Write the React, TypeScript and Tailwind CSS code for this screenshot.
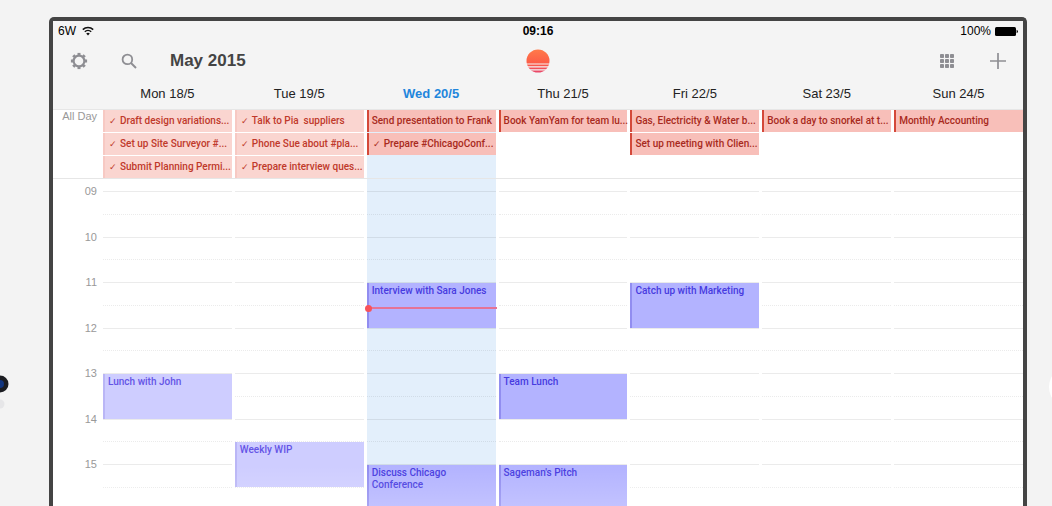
import React from "react";
import clsx from "clsx";

type AllDayItem = {
  title: string;
  checked?: boolean;
};

type CalendarEvent = {
  title: string;
  start: number;
  end: number;
};

type Day = {
  label: string;
  past?: boolean;
  today?: boolean;
  allDay: AllDayItem[];
  events: CalendarEvent[];
};

const FIRST_HOUR = 9;
const HOURS = ["09", "10", "11", "12", "13", "14", "15", "16"];
const NOW = 11.56;

const days: Day[] = [
  {
    label: "Mon 18/5",
    past: true,
    allDay: [
      { title: "Draft design variations...", checked: true },
      { title: "Set up Site Surveyor #...", checked: true },
      { title: "Submit Planning Permi...", checked: true },
    ],
    events: [{ title: "Lunch with John", start: 13, end: 14 }],
  },
  {
    label: "Tue 19/5",
    past: true,
    allDay: [
      { title: "Talk to Pia  suppliers", checked: true },
      { title: "Phone Sue about #pla...", checked: true },
      { title: "Prepare interview ques...", checked: true },
    ],
    events: [{ title: "Weekly WIP", start: 14.5, end: 15.5 }],
  },
  {
    label: "Wed 20/5",
    today: true,
    allDay: [
      { title: "Send presentation to Frank" },
      { title: "Prepare #ChicagoConf...", checked: true },
    ],
    events: [
      { title: "Interview with Sara Jones", start: 11, end: 12 },
      { title: "Discuss Chicago Conference", start: 15, end: 17 },
    ],
  },
  {
    label: "Thu 21/5",
    allDay: [{ title: "Book YamYam for team lu..." }],
    events: [
      { title: "Team Lunch", start: 13, end: 14 },
      { title: "Sageman's Pitch", start: 15, end: 17 },
    ],
  },
  {
    label: "Fri 22/5",
    allDay: [
      { title: "Gas, Electricity & Water b..." },
      { title: "Set up meeting with Clien..." },
    ],
    events: [{ title: "Catch up with Marketing", start: 11, end: 12 }],
  },
  {
    label: "Sat 23/5",
    allDay: [{ title: "Book a day to snorkel at t..." }],
    events: [],
  },
  {
    label: "Sun 24/5",
    allDay: [{ title: "Monthly Accounting" }],
    events: [],
  },
];

const WifiIcon = () => (
  <svg width="12" height="10" viewBox="0 0 12 10" fill="none" stroke="#111" strokeWidth="1.5">
    <path d="M0.8 3.6 A7.4 7.4 0 0 1 11.2 3.6" />
    <path d="M2.8 5.8 A4.6 4.6 0 0 1 9.2 5.8" />
    <path d="M6 9.4 L4.2 7.5 A2.6 2.6 0 0 1 7.8 7.5 Z" fill="#111" stroke="none" />
  </svg>
);

const BatteryIcon = () => (
  <svg width="23" height="9" viewBox="0 0 23 9" fill="#000">
    <rect width="21" height="9" rx="1.5" />
    <path d="M21.6 2.8 Q23 3.2 23 4.5 T21.6 6.2 Z" />
  </svg>
);

const GearIcon = () => (
  <svg width="18" height="18" viewBox="0 0 18 18" fill="none" stroke="#8e8e93">
    <circle cx="9" cy="9" r="5.4" strokeWidth="2.2" />
    {[0, 45, 90, 135, 180, 225, 270, 315].map((angle) => (
      <path key={angle} d="M9 0.9 V3.4" strokeWidth="3" transform={`rotate(${angle} 9 9)`} />
    ))}
  </svg>
);

const SearchIcon = () => (
  <svg width="16" height="16" viewBox="0 0 16 16" fill="none" stroke="#8e8e93" strokeWidth="1.8">
    <circle cx="6.4" cy="6.4" r="4.8" />
    <path d="M10 10 L15 15" strokeWidth="2" />
  </svg>
);

const GridIcon = () => (
  <svg width="14" height="14" viewBox="0 0 14 14" fill="#8e8e93">
    {[0, 5, 10].map((y) =>
      [0, 5, 10].map((x) => <rect key={`${x}-${y}`} x={x} y={y} width="4" height="4" rx="0.8" />)
    )}
  </svg>
);

const PlusIcon = () => (
  <svg width="16" height="16" viewBox="0 0 16 16" stroke="#8e8e93" strokeWidth="1.7">
    <path d="M8 0 V16 M0 8 H16" />
  </svg>
);

const SunLogo = () => (
  <svg width="24" height="24" viewBox="0 0 24 24">
    <defs>
      <linearGradient id="sun" x1="0" y1="0" x2="0" y2="1">
        <stop offset="0" stopColor="#ff7a4a" />
        <stop offset="0.65" stopColor="#fc5a47" />
        <stop offset="1" stopColor="#e8476b" />
      </linearGradient>
    </defs>
    <circle cx="12" cy="12" r="11.5" fill="url(#sun)" />
    <path d="M0 15 H24 M0 17.8 H24 M0 20.8 H24" stroke="#f4f4f4" strokeWidth="1.2" />
  </svg>
);

const StatusBar = () => (
  <div className="grid h-[20px] grid-cols-3 items-center px-[5px] text-[12px] text-black">
    <div className="flex items-center gap-[6px]">
      <span>6W</span>
      <WifiIcon />
    </div>
    <div className="text-center font-bold">09:16</div>
    <div className="flex items-center justify-end gap-[4px]">
      <span>100%</span>
      <BatteryIcon />
    </div>
  </div>
);

const Toolbar = () => (
  <div className="grid h-[40px] grid-cols-3 items-center px-[17px]">
    <div className="flex items-center">
      <button aria-label="Settings">
        <GearIcon />
      </button>
      <button className="ml-[33px]" aria-label="Search">
        <SearchIcon />
      </button>
      <h1 className="ml-[33px] text-[17px] font-bold whitespace-nowrap text-[#444]">May 2015</h1>
    </div>
    <div className="flex justify-center">
      <SunLogo />
    </div>
    <div className="flex items-center justify-end gap-[36px]">
      <button aria-label="Month view">
        <GridIcon />
      </button>
      <button aria-label="Add event">
        <PlusIcon />
      </button>
    </div>
  </div>
);

const AllDayRow: React.FC<{ item: AllDayItem; past?: boolean }> = ({ item, past }) => (
  <li
    className={clsx(
      "flex h-[22px] border-l-2 pl-[3px] font-[Roboto,sans-serif] text-[10px] leading-[22px] font-medium whitespace-pre",
      past ? "border-[#f7c9c3] bg-[#fad5d0] text-[#c0392b]" : "border-[#d4493a] bg-[#f8bfb9] text-[#a82a20]"
    )}
  >
    {item.checked && <span className="w-[12px] shrink-0 pl-px text-[9px] font-normal">✓</span>}
    <span>{item.title}</span>
  </li>
);

const EventBlock: React.FC<{ event: CalendarEvent; past?: boolean }> = ({ event, past }) => {
  const row = (event.start - FIRST_HOUR) * 2 + 1;
  const span = (event.end - event.start) * 2;

  return (
    <div
      className={clsx(
        "z-10 col-start-1 mt-px border-l-2 py-[2px] pr-[8px] pl-[3px] font-[Roboto,sans-serif] text-[10px] leading-[12px] font-medium",
        past ? "border-[#bab6f6] bg-[#cecdff] text-[#6454e6]" : "border-[#918df0] bg-[#b3b3ff] text-[#473be0]"
      )}
      style={{ gridRow: `${row} / span ${span}` }}
    >
      {event.title}
    </div>
  );
};

const DayColumn: React.FC<{ day: Day }> = ({ day }) => (
  <div className={clsx("pt-[12px]", day.today && "bg-[#e3effb]")}>
    <div className="relative grid h-[364px] grid-cols-1 grid-rows-[repeat(16,minmax(0,1fr))]">
      {HOURS.map((hour, i) => (
        <React.Fragment key={hour}>
          <div className="col-start-1 border-t border-black/8" style={{ gridRow: i * 2 + 1 }} />
          <div className="col-start-1 border-t border-dotted border-black/8" style={{ gridRow: i * 2 + 2 }} />
        </React.Fragment>
      ))}
      {day.events.map((event) => (
        <EventBlock key={event.title} event={event} past={day.past} />
      ))}
      {day.today && (
        <div
          className="absolute inset-x-0 z-20 -mr-px flex h-[2px] items-center bg-[#e57396]"
          style={{ top: `${((NOW - FIRST_HOUR) / HOURS.length) * 100}%` }}
        >
          <span className="-ml-[2px] h-[7px] w-[7px] shrink-0 rounded-full bg-[#f8525a]" />
        </div>
      )}
    </div>
  </div>
);

const App: React.FC = () => {
  return (
    <div className="relative h-screen overflow-hidden bg-[#f3f3f3] pt-[17px] pr-[25px] pl-[49px] font-['Liberation_Sans',Arial,sans-serif]">
      <div className="rounded-t-[5px] border-4 border-b-0 border-[#444] bg-white">
        <header className="border-b border-[#e6e6e6] bg-[#f4f4f4]">
          <StatusBar />
          <Toolbar />
          <div className="grid h-[28px] grid-cols-7 gap-x-[3px] pl-[50px] text-center text-[13px] leading-[26px] text-[#222]">
            {days.map((day) => (
              <div key={day.label} className={clsx(day.today && "font-bold text-[#1f86dc]")}>
                {day.label}
              </div>
            ))}
          </div>
        </header>

        <section className="grid grid-cols-[50px_minmax(0,1fr)] border-b border-[#e6e6e6]">
          <div className="pr-[6px] text-right text-[11px] leading-[12px] text-[#999]">All Day</div>
          <div className="grid grid-cols-7 gap-x-[3px]">
            {days.map((day) => (
              <ul key={day.label} className={clsx("flex min-w-0 flex-col gap-px", day.today && "bg-[#e3effb]")}>
                {day.allDay.map((item) => (
                  <AllDayRow key={item.title} item={item} past={day.past} />
                ))}
              </ul>
            ))}
          </div>
        </section>

        <section className="grid grid-cols-[50px_minmax(0,1fr)]">
          <div className="pt-[5px]">
            <div className="grid h-[364px] grid-rows-8 pr-[6px] text-right text-[11px] leading-[14px] text-[#999]">
              {HOURS.map((hour) => (
                <div key={hour}>{hour}</div>
              ))}
            </div>
          </div>
          <div className="grid grid-cols-7 gap-x-[3px]">
            {days.map((day) => (
              <DayColumn key={day.label} day={day} />
            ))}
          </div>
        </section>
      </div>

      <svg className="absolute top-[374px] left-0" width="10" height="36" viewBox="0 0 10 36">
        <circle cx="0" cy="10" r="8.5" fill="#1c1d22" />
        <circle cx="0" cy="10" r="4" fill="#12357f" />
        <circle cx="0" cy="30" r="4.5" fill="#e6e6e8" />
      </svg>
      <svg className="absolute top-[366px] right-0" width="4" height="42" viewBox="0 0 4 42">
        <circle cx="22" cy="21" r="21" fill="#fff" />
      </svg>
      <div className="absolute right-[29px] bottom-0 left-[53px] z-30 h-[40px] bg-linear-to-b from-white/0 to-white/20" />
    </div>
  );
};

export default App;
